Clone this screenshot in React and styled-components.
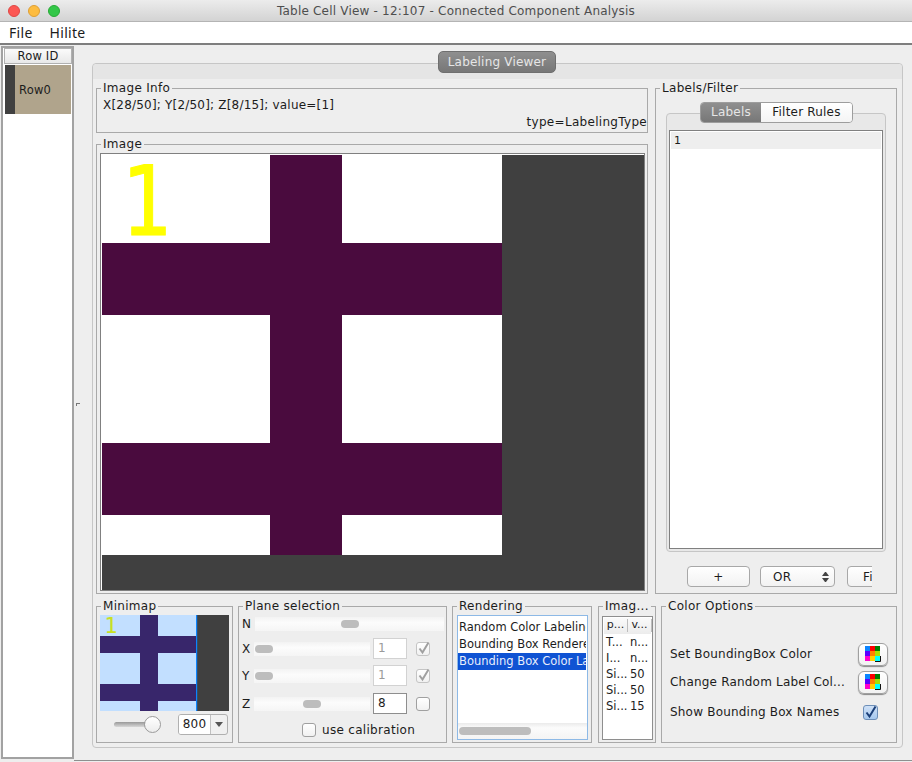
import React from 'react';
import styled, { createGlobalStyle } from 'styled-components';

const Global = createGlobalStyle`
  html, body { margin: 0; padding: 0; background: #eeeeee; }
  * { box-sizing: border-box; }
  #root { width: 912px; height: 762px; overflow: hidden; }
`;

const Window = styled.div`
  width: 912px; height: 762px; display: flex; flex-direction: column;
  background: #eeeeee; color: #1c1c1c; letter-spacing: .2px;
  font-family: "DejaVu Sans", "Liberation Sans", sans-serif; font-size: 12px;
`;
const TitleBar = styled.div`
  height: 22px; flex: none; display: flex; align-items: center; position: relative;
  background: linear-gradient(#ececec, #d3d3d3); border-bottom: 1px solid #b4b4b4; padding-left: 8px; gap: 8px;
`;
const Light = styled.span`
  width: 12px; height: 12px; border-radius: 50%; background: ${p => p.$c}; border: 1px solid ${p => p.$b};
`;
const Title = styled.div`
  position: absolute; left: 0; right: 0; top: 3px; text-align: center; color: #4e4e4e; font-size: 12px; line-height: 16px;
`;
const MenuBar = styled.div`
  height: 23px; flex: none; background: #fff; display: flex; align-items: center; gap: 17px; padding-left: 9px;
  font-size: 14px; letter-spacing: .3px; font-family: "Noto Sans", "DejaVu Sans", sans-serif; border-bottom: 2px solid #7e7e7e;
`;
const Body = styled.div`
  flex: 1; display: flex; min-height: 0; padding: 1px 0 1px 1px;
`;
const RowPanel = styled.div`
  width: 73px; flex: none; margin-bottom: 2px; background: #fff; border: 2px solid #a2a2a2; padding: 0 0 1px 1px;
  display: flex; flex-direction: column; gap: 1px;
`;
const RowHeader = styled.div`
  height: 16px; flex: none; border: 1px solid #b0b0b0; background: linear-gradient(#fbfbfb, #e8e8e8); text-align: center; line-height: 14px; font-size: 11.5px;
`;
const RowCell = styled.div`
  height: 49px; flex: none; margin: 0 1px; background: #b0a48c; border-left: 10px solid #404040; display: flex; align-items: center; padding-left: 4px; font-size: 11.5px;
`;
const Divider = styled.div`
  width: 18px; flex: none; display: flex; align-items: center; padding-left: 2px; border-bottom: 1px solid #8f8f8f;
`;
const Grip = styled.span`
  width: 4px; height: 3px; border-top: 1px solid #777; border-left: 1px solid #777; margin-top: 2px;
`;
const MainPane = styled.div`
  flex: 1; min-width: 0; padding: 17px 9px 12px 0; border-bottom: 1px solid #8f8f8f;
`;
const TabFrame = styled.div`
  height: 100%; border: 1px solid #c6c6c6; border-radius: 4px; position: relative; background: #eeeeee;
  display: flex; flex-direction: column;
`;
const TopStrip = styled.div`
  height: 15px; flex: none; background: #e5e5e5; border-radius: 4px 4px 0 0;
`;
const ActiveTab = styled.div`
  position: absolute; top: -13px; left: 345px; width: 118px; height: 22px; border-radius: 5px;
  background: linear-gradient(#8f8f8f, #777); border: 1px solid #6f6f6f; color: #e6e6e6; text-align: center; line-height: 20px; font-size: 12px;
`;
const Content = styled.div`
  flex: 1; min-height: 0; padding: 3px 5px 4px 3px; display: flex; flex-direction: column; gap: 6px;
`;
const TopArea = styled.div`
  display: grid; grid-template-columns: 552px 242px; gap: 7px; height: 512px; flex: none;
`;
const LeftCol = styled.div`
  display: flex; flex-direction: column; gap: 5px; min-width: 0;
`;
const Group = styled.fieldset`
  margin: 0 ${p => p.$mr || 0}px 0 0; min-width: 0; border: 1px solid #a9a9a9; padding: 0; display: flex; flex-direction: column;
  min-height: 0; width: ${p => p.$w || 'auto'}; flex: ${p => p.$flex || 'none'};
`;
const Legend = styled.legend`
  margin-left: 4px; padding: 0 2px; font-size: 12px; line-height: 13px; white-space: nowrap; color: #1c1c1c; letter-spacing: .3px;
`;
const InfoBody = styled.div`
  height: 37px; display: flex; flex-direction: column; justify-content: space-between; padding: 3px 0 3px 6px; line-height: 14px;
`;
const InfoType = styled.div`text-align: right; letter-spacing: .3px;`;
const ImageFrame = styled.div`
  margin: 2px 2px 2px 3px; flex: 1; border: 1px solid #808080; background: #fff; padding: 1px 0 0 1px; min-height: 0; overflow: hidden; display: flex;
`;
const RasterSvg = styled.svg`
  flex: none; display: block;
`;
const Right = styled.div`
  min-width: 0; display: flex;
`;
const InnerPane = styled.div`
  position: relative; margin: 18px 10px 0 10px; flex: none; height: 439px; border: 1px solid #c6c6c6; border-radius: 4px; background: #e8e8e8; padding: 16px 2px 2px 2px; display: flex;
`;
const Segments = styled.div`
  position: absolute; top: -12px; left: 33px; display: flex; height: 21px; border-radius: 4px; overflow: hidden; border: 1px solid #9d9d9d;
`;
const Segment = styled.div`
  width: ${p => p.$w}px; text-align: center; line-height: 19px; font-size: 12px;
  background: ${p => p.$on ? 'linear-gradient(#8f8f8f,#777)' : 'linear-gradient(#fff,#f4f4f4)'}; color: ${p => p.$on ? '#e6e6e6' : '#1c1c1c'};
`;
const LabelList = styled.div`
  flex: 1; background: #fff; border: 1px solid #808080; padding: 1px;
`;
const LabelRow = styled.div`
  height: 17px; background: #eeeeee; padding-left: 3px; line-height: 17px; font-size: 11px;
`;
const ButtonRow = styled.div`
  display: flex; gap: 10px; padding: 14px 0 0 31px; width: 216px; overflow: hidden; flex: none;
`;
const Button = styled.div`
  width: ${p => p.$w}px; height: 21px; flex: none; background: linear-gradient(#fff, #f2f2f2); border: 1px solid #a8a8a8; border-radius: 4px;
  margin-left: ${p => p.$ml || 0}px;
  display: flex; align-items: center; justify-content: ${p => p.$pl ? 'flex-start' : 'center'}; padding-left: ${p => p.$pl || 0}px; position: relative;
`;
const Stepper = styled.span`
  position: absolute; right: 5px; top: 5px; width: 7px; display: flex; flex-direction: column; gap: 2px;
  &::before { content: ''; border: 3.5px solid transparent; border-top: 0; border-bottom: 4px solid #444; }
  &::after { content: ''; border: 3.5px solid transparent; border-bottom: 0; border-top: 4px solid #444; }
`;
const BottomArea = styled.div`
  display: flex; gap: 5px; height: 143px; flex: none;
`;
const MapFrame = styled.div`
  margin: 2px 3px 0 3px; height: 96px; display: flex; overflow: hidden;
`;
const ZoomRow = styled.div`
  display: flex; align-items: center; padding: 3px 0 0 17px;
`;
const HTrack = styled.div`
  width: 36px; height: 5px; border-radius: 3px; background: linear-gradient(#999, #d8d8d8); position: relative;
`;
const Knob = styled.span`
  position: absolute; left: 30px; top: -6px; width: 17px; height: 17px; border-radius: 50%; background: linear-gradient(#fff, #ececec); border: 1px solid #9a9a9a;
`;
const Combo = styled.div`
  margin-left: 28px; display: flex; width: 50px; height: 21px; border-radius: 3px; overflow: hidden; border: 1px solid #b0b0b0; background: #f0f0f0;
`;
const ComboValue = styled.div`
  width: 32px; background: #fff; border-right: 1px solid #c0c0c0; line-height: 19px; text-align: center; font-size: 12px;
`;
const ComboArrow = styled.div`
  flex: 1; display: flex; align-items: center; justify-content: center;
  &::after { content: ''; border: 4px solid transparent; border-bottom: 0; border-top: 5px solid #555; }
`;
const PlaneBody = styled.div`
  padding: 0 2px 0 3px; display: flex; flex-direction: column;
`;
const PlaneRow = styled.div`
  display: flex; align-items: center; height: 21px; margin-top: ${p => p.$mt || 0}px;
`;
const AxisName = styled.span`
  width: ${p => p.$w}px; flex: none; font-size: 12px;
`;
const Slide = styled.div`
  position: relative; flex: ${p => p.$grow ? 1 : 'none'}; width: ${p => p.$grow ? 'auto' : '116px'}; height: 14px; background: linear-gradient(#f3f3f3, #fcfcfc 40%, #f5f5f5);
`;
const SlideThumb = styled.span`
  position: absolute; top: 3px; left: ${p => p.$left}px; width: 18px; height: 8px; border-radius: 4px; background: #bdbdbd;
`;
const Num = styled.div`
  margin-left: 3px; width: 34px; height: 21px; flex: none; background: #fff; border: ${p => p.$off ? '1px solid #d2d2d2' : '1px solid #8e8e8e'}; color: ${p => p.$off ? '#9a9a9a' : '#1c1c1c'};
  padding-left: 4px; line-height: 19px; font-size: 12px;
`;
const Check = styled.span`
  width: 14px; height: 14px; flex: none; border-radius: 3px; margin-left: ${p => p.$ml || 0}px; background: linear-gradient(#fff, #f1f1f1); border: 1px solid ${p => p.$c || '#a0a0a0'};
  display: flex; align-items: center; justify-content: center;
`;
const CalibRow = styled.div`
  display: flex; align-items: center; gap: 6px; padding-left: 60px; margin-top: 8px; height: 16px; letter-spacing: .3px;
`;
const RenderList = styled.div`
  margin: 2px 3px 0 4px; height: 125px; border: 1px solid #8db9e6; background: #fff; display: flex; flex-direction: column; overflow: hidden; padding-top: 3px;
`;
const RenderItems = styled.div`
  flex: 1;
`;
const RenderItem = styled.div`
  height: 17px; line-height: 17px; white-space: nowrap; overflow: hidden; padding-left: 1px; margin-right: 1px; font-size: 11.5px; letter-spacing: 0;
  background: ${p => p.$on ? '#0f53d3' : 'transparent'}; color: ${p => p.$on ? '#e8eefc' : '#1c1c1c'};
`;
const HScroll = styled.div`
  height: 16px; background: linear-gradient(#eaeaea, #fbfbfb 30%, #f4f4f4); padding: 4px 1px; flex: none;
`;
const HScrollThumb = styled.div`
  width: 72px; height: 8px; border-radius: 4px; background: #bdbdbd;
`;
const MiniTable = styled.div`
  margin: 3px 2px 0 3px; height: 124px; border: 1px solid #8e8e8e; background: #fff; overflow: hidden; padding: 1px; letter-spacing: 0;
`;
const MiniHead = styled.div`
  display: grid; grid-template-columns: 24px 24px; height: 16px; background: linear-gradient(#fafafa,#ececec); font-size: 11px;
`;
const MiniHeadCell = styled.span`
  text-align: center; border-right: 1px solid #bdbdbd; height: 13px; margin-top: 1px; line-height: 12px;
`;
const MiniRow = styled.div`
  display: grid; grid-template-columns: 24px 24px; height: 16px; line-height: 16px; padding-left: 2px; font-size: 11.5px;
`;
const ColorBody = styled.div`
  padding: 27px 8px 0 8px; display: flex; flex-direction: column;
`;
const ColorRow = styled.div`
  display: flex; align-items: center; justify-content: space-between; height: 28px; margin-top: ${p => p.$mt || 0}px; white-space: nowrap;
`;
const ColorBtn = styled.span`
  width: 30px; height: 23px; border-radius: 6px; background: linear-gradient(#fff, #f2f2f2); border: 1px solid #a0a0a0; box-shadow: 0 1px 1px #888;
  display: flex; align-items: center; justify-content: center;
`;
const BlueCheck = styled.span`
  width: 15px; height: 15px; margin-right: 10px; border-radius: 3px; background: linear-gradient(#cfe1f7, #a6c8ee); border: 1px solid #6d8fb8; display: flex; align-items: center; justify-content: center;
`;

const Tick = ({ c }) => (
  <svg width="13" height="13" viewBox="0 0 13 13" style={{ overflow: 'visible' }}>
    <path d="M2.5 6.5 L5.5 10.5 L11.5 0.5" fill="none" stroke={c} strokeWidth="2" />
  </svg>
);

const palette = ['#0a84ff', '#ff0000', '#008000', '#5a00ff', '#ff7f00', '#a8e000', '#ff00cc', '#ffd000', '#00ffff'];
const Swatch = () => (
  <svg width="16" height="16" viewBox="0 0 16 16">
    {palette.map((c, i) => <rect key={c} x={(i % 3) * 5} y={Math.floor(i / 3) * 5} width="5" height="5" fill={c} />)}
    <path d="M15.5 10 V15.5 H10" fill="none" stroke="#111" strokeWidth="1" />
  </svg>
);

const Raster = () => (
  <RasterSvg width="542" height="435" viewBox="0 0 542 435">
    <rect width="542" height="435" fill="#404040" />
    <rect width="400" height="400" fill="#fff" />
    <rect x="168" width="72" height="400" fill="#4a0b3e" />
    <rect y="88" width="400" height="72" fill="#4a0b3e" />
    <rect y="288" width="400" height="72" fill="#4a0b3e" />
    <text transform="translate(44 80) scale(.86 1)" textAnchor="middle" fontFamily="DejaVu Sans Mono" fontSize="97" fill="#ffff00" stroke="#ffff00" strokeWidth="1">1</text>
  </RasterSvg>
);

const MiniRaster = () => (
  <RasterSvg width="130" height="96" viewBox="0 0 130 96">
    <rect width="130" height="96" fill="#404040" />
    <rect width="96" height="96" fill="#c2dfff" />
    <rect x="96" width="1.2" height="96" fill="#0a84ff" />
    <rect x="40" width="18" height="96" fill="#38266b" />
    <rect y="21" width="96" height="17" fill="#38266b" />
    <rect y="69" width="96" height="17" fill="#38266b" />
    <text x="11" y="18" textAnchor="middle" fontFamily="DejaVu Sans Mono" fontSize="22" fill="#c8e020">1</text>
  </RasterSvg>
);

const Axis = ({ name, left, value, off, mt }) => (
  <PlaneRow $mt={mt}>
    <AxisName $w={12}>{name}</AxisName>
    <Slide><SlideThumb $left={left} /></Slide>
    <Num $off={off}>{value}</Num>
    <Check $ml={9} $c={off ? '#c4c4c4' : '#a0a0a0'}>{off && <Tick c="#a0a0a0" />}</Check>
  </PlaneRow>
);

export default function App() {
  return (
    <Window>
      <Global />
      <TitleBar>
        <Light $c="#fc5753" $b="#df4744" />
        <Light $c="#fdbc40" $b="#de9f34" />
        <Light $c="#33c748" $b="#27aa35" />
        <Title>Table Cell View - 12:107 - Connected Component Analysis</Title>
      </TitleBar>
      <MenuBar><span>File</span><span>Hilite</span></MenuBar>
      <Body>
        <RowPanel>
          <RowHeader>Row ID</RowHeader>
          <RowCell>Row0</RowCell>
        </RowPanel>
        <Divider><Grip /></Divider>
        <MainPane>
          <TabFrame>
            <ActiveTab>Labeling Viewer</ActiveTab>
            <TopStrip />
            <Content>
              <TopArea>
                <LeftCol>
                  <Group>
                    <Legend>Image Info</Legend>
                    <InfoBody>
                      <div>X[28/50]; Y[2/50]; Z[8/15]; value=[1]</div>
                      <InfoType>type=LabelingType</InfoType>
                    </InfoBody>
                  </Group>
                  <Group $flex="1">
                    <Legend>Image</Legend>
                    <ImageFrame><Raster /></ImageFrame>
                  </Group>
                </LeftCol>
                <Right>
                  <Group $flex="1">
                    <Legend>Labels/Filter</Legend>
                    <InnerPane>
                      <Segments>
                        <Segment $on $w={60}>Labels</Segment>
                        <Segment $w={91}>Filter Rules</Segment>
                      </Segments>
                      <LabelList><LabelRow>1</LabelRow></LabelList>
                    </InnerPane>
                    <ButtonRow>
                      <Button $w={63}>+</Button>
                      <Button $w={75} $pl={12}>OR<Stepper /></Button>
                      <Button $w={60} $pl={15} $ml={2}>Fi</Button>
                    </ButtonRow>
                  </Group>
                </Right>
              </TopArea>
              <BottomArea>
                <Group $w="137px">
                  <Legend>Minimap</Legend>
                  <MapFrame><MiniRaster /></MapFrame>
                  <ZoomRow>
                    <HTrack><Knob /></HTrack>
                    <Combo><ComboValue>800</ComboValue><ComboArrow /></Combo>
                  </ZoomRow>
                </Group>
                <Group $w="209px">
                  <Legend>Plane selection</Legend>
                  <PlaneBody>
                    <PlaneRow>
                      <AxisName $w={13}>N</AxisName>
                      <Slide $grow><SlideThumb $left={86} /></Slide>
                    </PlaneRow>
                    <Axis name="X" left={1} value="1" off mt={4} />
                    <Axis name="Y" left={1} value="1" off mt={6} />
                    <Axis name="Z" left={49} value="8" mt={7} />
                    <CalibRow><Check />use calibration</CalibRow>
                  </PlaneBody>
                </Group>
                <Group $w="140px" $mr={1}>
                  <Legend>Rendering</Legend>
                  <RenderList>
                    <RenderItems>
                      <RenderItem>Random Color Labeling Renderer</RenderItem>
                      <RenderItem>Bounding Box Renderer</RenderItem>
                      <RenderItem $on>Bounding Box Color Labeling Renderer</RenderItem>
                    </RenderItems>
                    <HScroll><HScrollThumb /></HScroll>
                  </RenderList>
                </Group>
                <Group $w="58px">
                  <Legend>Imag...</Legend>
                  <MiniTable>
                    <MiniHead><MiniHeadCell>p...</MiniHeadCell><MiniHeadCell>v...</MiniHeadCell></MiniHead>
                    <MiniRow><span>T...</span><span>n...</span></MiniRow>
                    <MiniRow><span>I...</span><span>n...</span></MiniRow>
                    <MiniRow><span>Si...</span><span>50</span></MiniRow>
                    <MiniRow><span>Si...</span><span>50</span></MiniRow>
                    <MiniRow><span>Si...</span><span>15</span></MiniRow>
                  </MiniTable>
                </Group>
                <Group $flex="1">
                  <Legend>Color Options</Legend>
                  <ColorBody>
                    <ColorRow>Set BoundingBox Color<ColorBtn><Swatch /></ColorBtn></ColorRow>
                    <ColorRow>Change Random Label Col...<ColorBtn><Swatch /></ColorBtn></ColorRow>
                    <ColorRow $mt={2}>Show Bounding Box Names<BlueCheck><Tick c="#1b3f78" /></BlueCheck></ColorRow>
                  </ColorBody>
                </Group>
              </BottomArea>
            </Content>
          </TabFrame>
        </MainPane>
      </Body>
    </Window>
  );
}
